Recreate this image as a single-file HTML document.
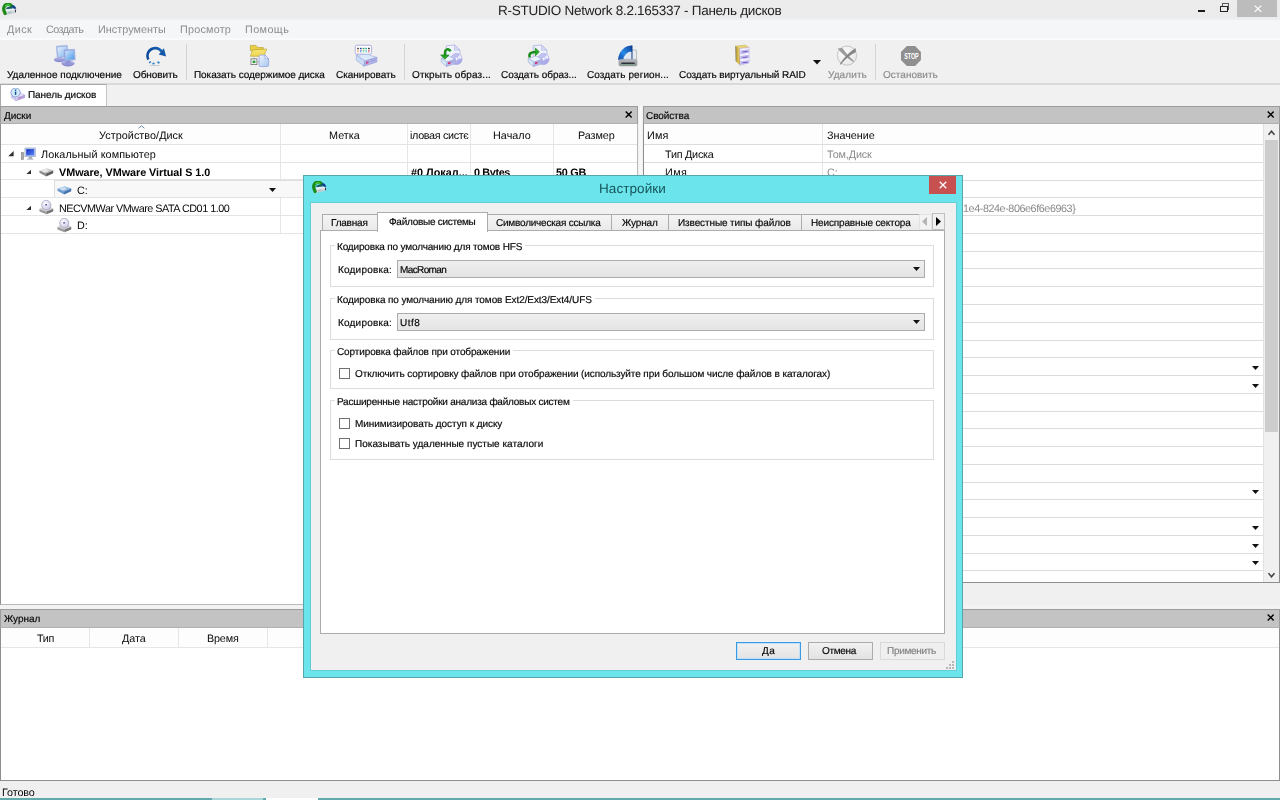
<!DOCTYPE html>
<html lang="ru"><head><meta charset="utf-8"><title>R-STUDIO Network</title>
<style>

html,body{margin:0;padding:0}
body{width:1280px;height:800px;overflow:hidden;position:relative;background:#f0f0f0;text-rendering:geometricPrecision;
 font-family:"Liberation Sans",sans-serif;font-size:10.8px;color:#000}
div,span.t,svg{position:absolute;box-sizing:border-box}
span.t{white-space:pre;display:block;will-change:transform}
span.h{-webkit-text-stroke:0.18px currentColor}
</style></head><body>
<div style="left:0px;top:0px;width:1280px;height:20px;background:linear-gradient(#ececec 0,#ebebeb 85%,#f0f0f0 100%)"></div>
<span class="t" style="left:497.80px;top:4px;font-size:13.5px;line-height:13.5px;color:#222;letter-spacing:-0.270px;">R-STUDIO Network 8.2.165337 - Панель дисков</span>
<svg style="left:2px;top:2.5px" width="15" height="13" viewBox="0 0 15 13"><defs><linearGradient id="ap2" x1="0" y1="0" x2="0.3" y2="1"><stop offset="0" stop-color="#ffffff"/><stop offset="1" stop-color="#b4c2cc"/></linearGradient></defs><path d="M7.6 2.9 Q11.2 1.9 13.2 5.9" stroke="#0d3c8a" stroke-width="2.6" fill="none"/><path d="M4.4 5.7 Q7 4.2 10.6 5.0" stroke="#15606e" stroke-width="1.9" fill="none"/><polygon points="3.8,6.4 11.6,5.5 14,6.6 14,9.4 4.6,12 3.6,10.6" fill="url(#ap2)"/><rect x="13" y="6.6" width="1" height="2.7" fill="#34344a"/><polygon points="6,9.2 9.4,8.4 9.4,9.3 6,10.1" fill="#93aaba"/><path d="M8.8 2.1 Q5.4 0.1 2.7 2.7 Q0.5 5.8 3.1 10.4" stroke="#1c8a18" stroke-width="3.3" fill="none" stroke-linecap="round"/><path d="M7.8 2.2 Q5.4 1.0 3.6 2.9" stroke="#4cc644" stroke-width="1.3" fill="none" stroke-linecap="round"/></svg>
<div style="left:1198px;top:9.8px;width:7.2000000000000455px;height:1.8999999999999986px;background:#1a1a1a"></div>
<div style="left:1222px;top:3.4px;width:7.2999999999999545px;height:6.6px;border:1px solid #555;border-top:1.8px solid #555"></div>
<div style="left:1220px;top:5.5px;width:7.5px;height:6.699999999999999px;border:1px solid #222;border-top:1.8px solid #222;background:#ebebeb"></div>
<div style="left:1237px;top:0px;width:40px;height:16.5px;background:#bcbcbc"></div>
<svg style="left:1253.6px;top:4.8px" width="8" height="7.6" viewBox="0 0 8 7.6"><path d="M0.7 0.6 L7.3 7 M7.3 0.6 L0.7 7" stroke="#fff" stroke-width="1.15" fill="none"/></svg>
<div style="left:0px;top:20px;width:1280px;height:18px;background:#f5f6f7"></div>
<div style="left:0px;top:38px;width:1280px;height:2px;background:#fbfbfb"></div>
<span class="t" style="left:6.80px;top:25px;font-size:10.8px;line-height:10.8px;color:#8d8d8d;letter-spacing:0.444px;">Диск</span>
<span class="t" style="left:45.80px;top:25px;font-size:10.8px;line-height:10.8px;color:#8d8d8d;letter-spacing:-0.539px;">Создать</span>
<span class="t" style="left:97.80px;top:25px;font-size:10.8px;line-height:10.8px;color:#8d8d8d;letter-spacing:0.047px;">Инструменты</span>
<span class="t" style="left:179.80px;top:25px;font-size:10.8px;line-height:10.8px;color:#8d8d8d;letter-spacing:0.212px;">Просмотр</span>
<span class="t" style="left:244.80px;top:25px;font-size:10.8px;line-height:10.8px;color:#8d8d8d;letter-spacing:0.419px;">Помощь</span>
<div style="left:0px;top:40px;width:1280px;height:43px;background:#f0f0f0"></div>
<div style="left:0px;top:83px;width:1280px;height:1.5px;background:#dadada"></div>
<span class="t h" style="left:6.80px;top:71px;font-size:10.0px;line-height:10.0px;color:#080808;letter-spacing:-0.008px;">Удаленное подключение</span>
<span class="t h" style="left:132.80px;top:71px;font-size:10.0px;line-height:10.0px;color:#080808;letter-spacing:-0.069px;">Обновить</span>
<span class="t h" style="left:193.80px;top:71px;font-size:10.0px;line-height:10.0px;color:#080808;letter-spacing:-0.064px;">Показать содержимое диска</span>
<span class="t h" style="left:335.80px;top:71px;font-size:10.0px;line-height:10.0px;color:#080808;letter-spacing:-0.015px;">Сканировать</span>
<span class="t h" style="left:411.80px;top:71px;font-size:10.0px;line-height:10.0px;color:#080808;letter-spacing:0.101px;">Открыть образ...</span>
<span class="t h" style="left:500.80px;top:71px;font-size:10.0px;line-height:10.0px;color:#080808;letter-spacing:-0.014px;">Создать образ...</span>
<span class="t h" style="left:586.80px;top:71px;font-size:10.0px;line-height:10.0px;color:#080808;letter-spacing:0.077px;">Создать регион...</span>
<span class="t h" style="left:678.80px;top:71px;font-size:10.0px;line-height:10.0px;color:#080808;letter-spacing:-0.060px;">Создать виртуальный RAID</span>
<span class="t h" style="left:827.80px;top:71px;font-size:10.0px;line-height:10.0px;color:#8d8d8d;letter-spacing:0.102px;">Удалить</span>
<span class="t h" style="left:882.80px;top:71px;font-size:10.0px;line-height:10.0px;color:#8d8d8d;letter-spacing:0.023px;">Остановить</span>
<div style="left:186px;top:44px;width:1px;height:35.5px;background:#d4d4d4"></div>
<div style="left:404px;top:44px;width:1px;height:35.5px;background:#d4d4d4"></div>
<div style="left:875px;top:44px;width:1px;height:35.5px;background:#d4d4d4"></div>
<svg style="left:53px;top:44px" width="24" height="24" viewBox="0 0 24 24"><defs><linearGradient id="rm1" x1="0" y1="0" x2="1" y2="1"><stop offset="0" stop-color="#e4effc"/><stop offset="1" stop-color="#86b6ee"/></linearGradient><linearGradient id="rm2" x1="0" y1="0" x2="1" y2="1"><stop offset="0" stop-color="#d3e6fb"/><stop offset="1" stop-color="#4a9ae8"/></linearGradient><linearGradient id="rm3" x1="0" y1="0" x2="0" y2="1"><stop offset="0" stop-color="#b4b6e8"/><stop offset="1" stop-color="#8284cc"/></linearGradient></defs><ellipse cx="6.5" cy="15.75" rx="5.6" ry="2.6" fill="url(#rm3)"/><polygon points="3.25,2.25 14.25,1.25 15.25,12.75 4.25,13.75" fill="#a6b9e8" stroke="#93a6dc" stroke-width="0.5"/><polygon points="4.50,3.50 13.25,2.60 14.00,11.75 5.25,12.50" fill="url(#rm1)"/><ellipse cx="15.0" cy="19.5" rx="6.6" ry="2.9" fill="url(#rm3)"/><polygon points="12.75,17.00 17.00,16.00 17.50,19.50 13.00,20.00" fill="#8f92d4"/><polygon points="11.00,6.00 21.50,5.25 22.25,15.75 11.75,17.00" fill="#9cb2e6" stroke="#8599d8" stroke-width="0.5"/><polygon points="12.25,7.25 20.40,6.60 21.10,14.75 12.90,15.75" fill="url(#rm2)"/></svg>
<svg style="left:144px;top:45px" width="24" height="22" viewBox="0 0 24 22"><defs><linearGradient id="rf1" x1="0" y1="0" x2="1" y2="0"><stop offset="0" stop-color="#0d4a9a"/><stop offset="1" stop-color="#1b66b8"/></linearGradient></defs><path d="M4.27 14.71 A7.9 7.9 0 1 1 19.07 9.90" stroke="url(#rf1)" stroke-width="2.6" fill="none"/><polygon points="19.90,3.25 22.10,11.50 14.75,9.50" fill="#1458a8"/><rect x="4.90" y="16.45" width="2.2" height="1.7" fill="#2f7fc6" transform="rotate(-35 6.0 17.25)"/><rect x="8.40" y="17.70" width="2.2" height="1.7" fill="#2f7fc6" transform="rotate(-10 9.5 18.5)"/><rect x="13.40" y="16.70" width="2.2" height="1.7" fill="#2f7fc6" transform="rotate(20 14.5 17.5)"/><ellipse cx="11.0" cy="20.6" rx="6" ry="0.5" fill="#c8c8c8"/></svg>
<svg style="left:249px;top:44px" width="22" height="24" viewBox="0 0 22 24"><defs><linearGradient id="fo1" x1="0" y1="0" x2="0" y2="1"><stop offset="0" stop-color="#f7e77a"/><stop offset="1" stop-color="#efd64c"/></linearGradient><linearGradient id="fo2" x1="0" y1="0" x2="1" y2="1"><stop offset="0" stop-color="#edf3fd"/><stop offset="1" stop-color="#a9c8ee"/></linearGradient></defs><polygon points="1.35,1.40 7.00,1.40 8.90,3.50 14.25,3.50 14.25,6.75 1.35,6.75" fill="#e9cf45" stroke="#b39c28" stroke-width="0.6"/><polygon points="3.75,5.75 17.75,5.10 14.75,12.25 1.35,12.25" fill="url(#fo1)" stroke="#b39c28" stroke-width="0.6"/><rect x="2.0" y="14.9" width="5.90" height="5.70" fill="#fff" stroke="#6f6f6f" stroke-width="0.8"/><rect x="3.6" y="16.55" width="2.8" height="2.6" fill="#2f9a3c"/><rect x="4.55" y="13.95" width="0.9" height="0.8" fill="#555"/><rect x="8.4" y="17.45" width="1.2" height="0.7" fill="#777"/><path d="M11.00,11.00 L16.00,11.00 L19.60,14.75 L19.60,21.25 Q19.60,22.50 18.50,22.50 L11.25,22.50 Q10.10,22.50 10.10,21.25 L10.10,12.25 Q10.10,11.00 11.00,11.00Z" fill="url(#fo2)" stroke="#8c98de" stroke-width="0.7"/><polygon points="16.00,11.00 16.00,14.75 19.60,14.75" fill="#f4f7fe" stroke="#8c98de" stroke-width="0.6"/></svg>
<svg style="left:354px;top:44px" width="25" height="24" viewBox="0 0 25 24"><polygon points="2.35,11.00 12.50,10.25 22.90,13.40 10.75,17.00" fill="#dde8f9" stroke="#9aa2da" stroke-width="0.6"/><polygon points="2.35,11.00 10.75,17.00 9.90,22.25 2.35,16.25" fill="#c9dbf5" stroke="#9aa2da" stroke-width="0.6"/><polygon points="10.75,17.00 22.90,13.40 22.90,17.90 9.90,22.25" fill="#adb4e7" stroke="#9098d6" stroke-width="0.6"/><polygon points="12.00,18.00 14.50,17.25 14.50,19.10 12.00,19.90" fill="#d93a78"/><polygon points="16.00,17.00 21.50,15.25 21.50,16.00 16.00,17.80" fill="#8f93d8"/><polygon points="11.00,10.25 16.00,10.25 15.00,13.00 13.00,12.50" fill="#c6ecf8"/><rect x="1.25" y="1.25" width="16.35" height="8.90" rx="1.6" fill="#fff" stroke="#a3a8dc" stroke-width="0.9"/><rect x="3.20" y="3.80" width="1.7" height="1.4" fill="#3a3a3a"/><rect x="3.20" y="6.20" width="1.7" height="1.4" fill="#e89a5a"/><rect x="3.20" y="8.10" width="1.7" height="0.9" fill="#e89a5a" opacity="0.35"/><rect x="5.95" y="3.80" width="1.7" height="1.4" fill="#1f3f9c"/><rect x="5.95" y="6.20" width="1.7" height="1.4" fill="#5a7fd8"/><rect x="5.95" y="8.10" width="1.7" height="0.9" fill="#5a7fd8" opacity="0.35"/><rect x="8.70" y="3.80" width="1.7" height="1.4" fill="#2f9a4a"/><rect x="8.70" y="6.20" width="1.7" height="1.4" fill="#69c878"/><rect x="8.70" y="8.10" width="1.7" height="0.9" fill="#69c878" opacity="0.35"/><rect x="11.30" y="3.80" width="1.7" height="1.4" fill="#2aa0a8"/><rect x="11.30" y="6.20" width="1.7" height="1.4" fill="#5cc0d0"/><rect x="11.30" y="8.10" width="1.7" height="0.9" fill="#5cc0d0" opacity="0.35"/><rect x="14.05" y="3.80" width="1.7" height="1.4" fill="#2a2a2a"/><rect x="14.05" y="6.20" width="1.7" height="1.4" fill="#c85a5a"/><rect x="14.05" y="8.10" width="1.7" height="0.9" fill="#c85a5a" opacity="0.35"/></svg>
<svg style="left:440px;top:44px" width="24" height="24" viewBox="0 0 24 24"><defs><linearGradient id="oia" x1="0" y1="0" x2="1" y2="1"><stop offset="0" stop-color="#cfcff6"/><stop offset="1" stop-color="#9d9de6"/></linearGradient></defs><polygon points="6.25,1.75 14.50,1.00 20.00,6.25 20.00,16.00 6.25,16.00" fill="#f0f3fd" stroke="#a6aade" stroke-width="0.7"/><polygon points="14.50,1.00 14.50,6.25 20.00,6.25" fill="#d7dbf5" stroke="#a6aade" stroke-width="0.5"/><circle cx="16.5" cy="15.0" r="5.6" fill="url(#oia)" stroke="#9c9ce2" stroke-width="0.6"/><path d="M16.5 15.0 L19.70 10.60 A5.5 5.5 0 0 1 21.90 14.40Z" fill="#f1f1fd" opacity="0.9"/><path d="M16.5 15.0 L13.30 19.40 A5.5 5.5 0 0 1 11.10 15.60Z" fill="#e4e4fa" opacity="0.6"/><circle cx="16.5" cy="15.0" r="1.4" fill="#fff" stroke="#b9b9ee" stroke-width="0.5"/><polygon points="1.25,14.25 9.25,12.25 15.25,15.25 7.25,18.00" fill="#eaf5fb" stroke="#a3a8dc" stroke-width="0.6"/><polygon points="1.25,14.25 7.25,18.00 6.50,22.50 1.25,18.25" fill="#d2e8f5" stroke="#a3a8dc" stroke-width="0.6"/><polygon points="7.25,18.00 15.25,15.25 15.25,19.50 6.50,22.50" fill="#b5bceb" stroke="#9aa0da" stroke-width="0.6"/><polygon points="8.00,18.60 10.60,17.80 10.60,19.50 8.00,20.30" fill="#d6306c"/><polygon points="11.50,18.00 14.75,16.90 14.75,17.60 11.50,18.70" fill="#8f93d8"/><path d="M10.60,7.25 Q8.00,3.50 5.25,6.75 L4.75,11.50" stroke="#1a931a" stroke-width="2.4" fill="none"/><polygon points="0.60,10.90 9.10,10.90 4.85,15.25" fill="#25a325" stroke="#137813" stroke-width="0.5"/></svg>
<svg style="left:526px;top:44px" width="25" height="24" viewBox="0 0 25 24"><defs><linearGradient id="cia" x1="0" y1="0" x2="1" y2="1"><stop offset="0" stop-color="#cfcff6"/><stop offset="1" stop-color="#9d9de6"/></linearGradient></defs><polygon points="7.25,1.75 15.50,1.00 21.00,6.25 21.00,16.00 7.25,16.00" fill="#f0f3fd" stroke="#a6aade" stroke-width="0.7"/><polygon points="15.50,1.00 15.50,6.25 21.00,6.25" fill="#d7dbf5" stroke="#a6aade" stroke-width="0.5"/><circle cx="17.5" cy="15.0" r="5.6" fill="url(#cia)" stroke="#9c9ce2" stroke-width="0.6"/><path d="M17.5 15.0 L20.70 10.60 A5.5 5.5 0 0 1 22.90 14.40Z" fill="#f1f1fd" opacity="0.9"/><path d="M17.5 15.0 L14.30 19.40 A5.5 5.5 0 0 1 12.10 15.60Z" fill="#e4e4fa" opacity="0.6"/><circle cx="17.5" cy="15.0" r="1.4" fill="#fff" stroke="#b9b9ee" stroke-width="0.5"/><polygon points="2.25,14.25 10.25,12.25 16.25,15.25 8.25,18.00" fill="#eaf5fb" stroke="#a3a8dc" stroke-width="0.6"/><polygon points="2.25,14.25 8.25,18.00 7.50,22.50 2.25,18.25" fill="#d2e8f5" stroke="#a3a8dc" stroke-width="0.6"/><polygon points="8.25,18.00 16.25,15.25 16.25,19.50 7.50,22.50" fill="#b5bceb" stroke="#9aa0da" stroke-width="0.6"/><polygon points="9.00,18.60 11.60,17.80 11.60,19.50 9.00,20.30" fill="#d6306c"/><polygon points="12.50,18.00 15.75,16.90 15.75,17.60 12.50,18.70" fill="#8f93d8"/><path d="M3.75,13.50 Q2.00,7.75 10.00,7.90" stroke="#1a8a1a" stroke-width="2.5" fill="none"/><polygon points="9.25,3.75 13.40,7.90 9.25,11.90" fill="#27a827" stroke="#137813" stroke-width="0.5"/></svg>
<svg style="left:617px;top:44px" width="23" height="24" viewBox="0 0 23 24"><defs><linearGradient id="rg1" x1="0" y1="1" x2="1" y2="0"><stop offset="0" stop-color="#0c48a8"/><stop offset="0.45" stop-color="#2a8ae6"/><stop offset="1" stop-color="#0b3f9a"/></linearGradient><linearGradient id="rg2" x1="0" y1="0" x2="0" y2="1"><stop offset="0" stop-color="#b9bcc0"/><stop offset="1" stop-color="#8d9196"/></linearGradient></defs><rect x="14.25" y="6.0" width="5.35" height="10.50" rx="1" fill="#e6eaee" stroke="#a4a8ac" stroke-width="0.7"/><path d="M1.15 15.9 A13.9 14.3 0 0 1 15.1 1.6 L15.1 15.9Z" fill="url(#rg1)"/><path d="M6.4 15.9 A8.7 8.3 0 0 1 15.1 7.6 L15.1 15.9Z" fill="#dfe9f6"/><rect x="14.5" y="1.6" width="0.9" height="14.30" fill="#0a2f7c"/><rect x="1.9" y="15.25" width="18.20" height="6.75" rx="1.6" fill="url(#rg2)" stroke="#9a9ea2" stroke-width="0.5"/><rect x="4.25" y="18.6" width="13.50" height="1.50" rx="0.6" fill="#2e3236"/><rect x="4.25" y="20.1" width="13.50" height="0.6" fill="#5aa85a" opacity="0.6"/></svg>
<svg style="left:733px;top:44px" width="20" height="24" viewBox="0 0 20 24"><defs><linearGradient id="rd1" x1="0" y1="0" x2="1" y2="0"><stop offset="0" stop-color="#77745a"/><stop offset="0.35" stop-color="#c9aa40"/><stop offset="0.7" stop-color="#e0c254"/><stop offset="1" stop-color="#a8892a"/></linearGradient></defs><polygon points="2.25,2.25 12.00,1.15 16.10,3.50 6.60,4.60" fill="#ecd57a" stroke="#c0a23a" stroke-width="0.5"/><polygon points="2.25,2.25 6.60,4.60 7.10,21.60 2.60,16.90" fill="url(#rd1)"/><polygon points="6.60,4.60 16.10,3.50 16.35,18.00 7.10,21.60" fill="#f4f4fc" stroke="#b7b2e4" stroke-width="0.5"/><polygon points="7.40,5.40 15.85,4.30 15.95,8.65 7.50,9.95" fill="#bdb4ee"/><polygon points="7.40,5.40 15.85,4.30 15.85,5.30 7.40,6.50" fill="#ffffff"/><polygon points="9.75,7.70 14.50,6.90 14.50,7.70 9.75,8.50" fill="#6546ae"/><polygon points="7.40,10.90 15.85,9.80 15.95,14.00 7.50,15.30" fill="#bdb4ee"/><polygon points="7.40,10.90 15.85,9.80 15.85,10.80 7.40,12.00" fill="#ffffff"/><polygon points="9.75,13.20 14.50,12.40 14.50,13.20 9.75,14.00" fill="#6546ae"/><polygon points="7.40,16.25 15.85,15.15 15.95,19.50 7.50,20.80" fill="#bdb4ee"/><polygon points="7.40,16.25 15.85,15.15 15.85,16.15 7.40,17.35" fill="#ffffff"/><polygon points="9.75,18.55 14.50,17.75 14.50,18.55 9.75,19.35" fill="#6546ae"/></svg>
<svg style="left:836px;top:44px" width="23" height="23" viewBox="0 0 23 23"><defs><radialGradient id="dl1" cx="0.35" cy="0.35" r="0.8"><stop offset="0" stop-color="#fbfbfb"/><stop offset="1" stop-color="#e6e6e6"/></radialGradient></defs><circle cx="11.0" cy="11.6" r="9.6" fill="url(#dl1)" stroke="#b9b9b9" stroke-width="0.8"/><path d="M1.60,4.40 L6.25,4.10 Q10.50,10.50 18.10,17.25 L17.40,17.90 Q9.00,13.00 1.60,4.40Z" fill="#9a9a9a"/><path d="M19.60,3.90 L19.90,7.90 Q11.00,12.50 4.60,20.85 L3.90,20.10 Q9.00,11.00 19.60,3.90Z" fill="#868686"/></svg>
<svg style="left:900px;top:45px" width="22" height="22" viewBox="0 0 22 22"><polygon points="6.88,0.94 15.12,0.94 20.94,6.88 20.94,15.12 15.12,20.94 6.88,20.94 0.94,15.12 0.94,6.88" fill="#8f8f8f"/><text x="4.25" y="13.88" font-family="Liberation Sans, sans-serif" font-weight="bold" font-size="8.6" fill="#fff" textLength="14.4" lengthAdjust="spacingAndGlyphs">STOP</text></svg>
<svg style="left:812.5px;top:60px" width="8" height="5" viewBox="0 0 8 5"><path d="M0 0H8L4 4.5Z" fill="#111"/></svg>
<div style="left:0px;top:84.5px;width:1280px;height:21.5px;background:#f1f1f1"></div>
<div style="left:0px;top:84px;width:107px;height:23px;background:#fff;border:1px solid #a9a9a9;border-bottom:none;border-right-color:#c6c6c6"></div>
<span class="t h" style="left:27.80px;top:91px;font-size:10.0px;line-height:10.0px;color:#080808;letter-spacing:-0.067px;">Панель дисков</span>
<svg style="left:10px;top:88px" width="16" height="14" viewBox="0 0 16 14"><polygon points="1.25,7.87 11.00,4.87 14.75,7.12 6.12,10.50" fill="#e9e4f8" stroke="#b5acdc" stroke-width="0.5"/><polygon points="1.25,7.87 6.12,10.50 5.94,12.75 1.44,9.94" fill="#ddd6f4" stroke="#b5acdc" stroke-width="0.5"/><polygon points="6.12,10.50 14.75,7.12 14.56,9.75 5.94,12.75" fill="#b9a6e0" stroke="#a594d4" stroke-width="0.5"/><polygon points="6.50,9.19 7.32,8.92 7.25,11.62 6.42,11.92" fill="#ffffff"/><polygon points="8.37,9.94 11.00,8.92 11.00,9.45 8.37,10.50" fill="#d45a9a"/><circle cx="5.56" cy="4.5" r="4.6" fill="#d3ebfb" stroke="#7f93cf" stroke-width="0.9"/><rect x="4.81" y="3.60" width="1.5" height="3.2" fill="#114f8f"/><rect x="4.81" y="1.60" width="1.5" height="1.3" fill="#114f8f"/></svg>
<div style="left:638px;top:106px;width:5px;height:498px;background:linear-gradient(90deg,#f0f0f0,#f9f9f9 50%,#f0f0f0)"></div>
<div style="left:0px;top:604.5px;width:1280px;height:4.5px;background:#f3f3f3"></div>
<div style="left:0px;top:106px;width:638px;height:498.5px;background:#fff;border:1px solid #8e8e8e;border-bottom-color:#b9b9b9;border-right-color:#b9b9b9"></div>
<div style="left:0px;top:106px;width:638px;height:18px;background:#c3c3c3;border:1px solid #9c9c9c;border-bottom-color:#b0b0b0"></div>
<span class="t h" style="left:4.30px;top:112px;font-size:10.0px;line-height:10.0px;color:#080808;letter-spacing:-0.007px;">Диски</span>
<svg style="left:624.8px;top:110.8px" width="7.4" height="7" viewBox="0 0 7.4 7"><path d="M0.7 0.6L6.7 6.4M6.7 0.6L0.7 6.4" stroke="#000" stroke-width="1.4" fill="none"/></svg>
<div style="left:1px;top:124px;width:636px;height:21px;background:#fdfdfd;border-bottom:1px solid #e3e3e3"></div>
<div style="left:280px;top:124px;width:1px;height:109px;background:#e6e6e6"></div>
<div style="left:407px;top:124px;width:1px;height:109px;background:#e6e6e6"></div>
<div style="left:470px;top:124px;width:1px;height:109px;background:#e6e6e6"></div>
<div style="left:553px;top:124px;width:1px;height:109px;background:#e6e6e6"></div>
<span class="t" style="left:98.80px;top:131px;font-size:10.8px;line-height:10.8px;color:#080808;letter-spacing:0.060px;">Устройство/Диск</span>
<span class="t" style="left:328.80px;top:131px;font-size:10.8px;line-height:10.8px;color:#080808;letter-spacing:0.028px;">Метка</span>
<span class="t" style="left:409.80px;top:131px;font-size:10.8px;line-height:10.8px;color:#080808;letter-spacing:-0.343px;">іловая систє</span>
<span class="t" style="left:492.80px;top:131px;font-size:10.8px;line-height:10.8px;color:#080808;letter-spacing:0.035px;">Начало</span>
<span class="t" style="left:577.80px;top:131px;font-size:10.8px;line-height:10.8px;color:#080808;letter-spacing:-0.062px;">Размер</span>
<svg style="left:137.5px;top:125px" width="7" height="4" viewBox="0 0 7 4"><path d="M0.5 3.3L3.5 0.8L6.5 3.3" stroke="#6b8ba8" stroke-width="1" fill="none"/></svg>
<div style="left:54px;top:180px;width:583px;height:18px;background:#f8f8f8;border:1px solid #dedede"></div>
<div style="left:1px;top:161.6px;width:636px;height:1.0px;background:#e4e4e4"></div>
<div style="left:1px;top:179.3px;width:636px;height:1.0px;background:#e4e4e4"></div>
<div style="left:1px;top:197.0px;width:636px;height:1.0px;background:#e4e4e4"></div>
<div style="left:1px;top:214.8px;width:636px;height:1.0px;background:#e4e4e4"></div>
<div style="left:1px;top:232.5px;width:636px;height:1.0px;background:#e4e4e4"></div>
<span class="t" style="left:40.80px;top:150px;font-size:10.8px;line-height:10.8px;color:#080808;letter-spacing:0.090px;">Локальный компьютер</span>
<span class="t" style="left:58.80px;top:168px;font-size:10.8px;line-height:10.8px;color:#000;font-weight:bold;letter-spacing:-0.035px;">VMware, VMware Virtual S 1.0</span>
<span class="t" style="left:76.80px;top:186px;font-size:10.8px;line-height:10.8px;color:#080808;">C:</span>
<span class="t" style="left:58.80px;top:204px;font-size:10.8px;line-height:10.8px;color:#080808;letter-spacing:-0.476px;">NECVMWar VMware SATA CD01 1.00</span>
<span class="t" style="left:76.80px;top:221px;font-size:10.8px;line-height:10.8px;color:#080808;">D:</span>
<span class="t" style="left:410.80px;top:168px;font-size:10.8px;line-height:10.8px;color:#000;font-weight:bold;letter-spacing:0.035px;">#0 Локал...</span>
<span class="t" style="left:473.80px;top:168px;font-size:10.8px;line-height:10.8px;color:#000;font-weight:bold;letter-spacing:-0.354px;">0 Bytes</span>
<span class="t" style="left:556.30px;top:168px;font-size:10.8px;line-height:10.8px;color:#000;font-weight:bold;letter-spacing:-0.230px;">50 GB</span>
<svg style="left:269px;top:188px" width="7" height="4" viewBox="0 0 7 4"><path d="M0 0H7L3.5 4Z" fill="#111"/></svg>
<svg style="left:20px;top:147px" width="17" height="14" viewBox="0 0 17 14"><defs><linearGradient id="pc1" x1="0" y1="0" x2="1" y2="1"><stop offset="0" stop-color="#1530c8"/><stop offset="1" stop-color="#5a86f2"/></linearGradient></defs><rect x="1.23" y="5.4" width="2.40" height="7.20" fill="#a9a9a9" stroke="#7d7d7d" stroke-width="0.5"/><rect x="4.9" y="0.9" width="10.65" height="8.85" fill="#bccbe2" stroke="#93a4c4" stroke-width="0.5"/><rect x="6.25" y="2.1" width="7.95" height="6.30" fill="url(#pc1)"/><polygon points="8.88,9.90 11.88,9.90 12.63,11.85 8.13,11.85" fill="#9aa2ac"/><rect x="6.85" y="11.7" width="6.53" height="1.05" fill="#b5bcc6"/></svg>
<svg style="left:39px;top:167.5px" width="15" height="10" viewBox="0 0 15 10"><defs><linearGradient id="dva" x1="0" y1="0" x2="1" y2="0.4"><stop offset="0" stop-color="#ececec"/><stop offset="1" stop-color="#b9b9b9"/></linearGradient></defs><polygon points="0.4,2.6 7.8,0.3 14.3,2.6 7,5.4" fill="url(#dva)"/><polygon points="0.4,2.6 7,5.4 7.2,8.5 0.5,4.8" fill="#8a8a8a"/><polygon points="7,5.4 14.3,2.6 14.2,5.2 7.2,8.5" fill="#5c5c5c"/><ellipse cx="6.6" cy="2.6" rx="3" ry="1.1" fill="#fff" opacity="0.55" transform="rotate(-6 6.6 2.6)"/></svg>
<svg style="left:57px;top:185.5px" width="15" height="10" viewBox="0 0 15 10"><defs><linearGradient id="dvb" x1="0" y1="0" x2="1" y2="0.4"><stop offset="0" stop-color="#b5d2ee"/><stop offset="1" stop-color="#86b2de"/></linearGradient></defs><polygon points="0.4,2.6 7.8,0.3 14.3,2.6 7,5.4" fill="url(#dvb)"/><polygon points="0.4,2.6 7,5.4 7.2,8.5 0.5,4.8" fill="#6796cc"/><polygon points="7,5.4 14.3,2.6 14.2,5.2 7.2,8.5" fill="#4575ae"/><ellipse cx="6.6" cy="2.6" rx="3" ry="1.1" fill="#fff" opacity="0.55" transform="rotate(-6 6.6 2.6)"/></svg>
<svg style="left:39px;top:200px" width="15" height="15" viewBox="0 0 15 15"><defs><radialGradient id="cd1" cx="0.4" cy="0.35" r="0.7"><stop offset="0" stop-color="#ffffff"/><stop offset="1" stop-color="#c6c5e4"/></radialGradient></defs><polygon points="0.3,9 4.6,6.6 10.6,6.6 14.3,8.8 7.4,11.5" fill="#d0d0d0"/><polygon points="0.3,9 7.4,11.5 7.4,14.2 0.5,11.4" fill="#9c9c9c"/><polygon points="7.4,11.5 14.3,8.8 14.2,11.4 7.4,14.2" fill="#767676"/><ellipse cx="7.3" cy="5.1" rx="4.6" ry="4.8" fill="url(#cd1)" stroke="#a3a2c2" stroke-width="0.7"/><circle cx="7.1" cy="4.8" r="0.9" fill="#45459a"/></svg>
<svg style="left:57px;top:218px" width="15" height="15" viewBox="0 0 15 15"><defs><radialGradient id="cd2" cx="0.4" cy="0.35" r="0.7"><stop offset="0" stop-color="#ffffff"/><stop offset="1" stop-color="#c6c5e4"/></radialGradient></defs><polygon points="0.3,9 4.6,6.6 10.6,6.6 14.3,8.8 7.4,11.5" fill="#d0d0d0"/><polygon points="0.3,9 7.4,11.5 7.4,14.2 0.5,11.4" fill="#9c9c9c"/><polygon points="7.4,11.5 14.3,8.8 14.2,11.4 7.4,14.2" fill="#767676"/><ellipse cx="7.3" cy="5.1" rx="4.6" ry="4.8" fill="url(#cd2)" stroke="#a3a2c2" stroke-width="0.7"/><circle cx="7.1" cy="4.8" r="0.9" fill="#45459a"/></svg>
<svg style="left:8px;top:151.3px" width="5.8" height="5.4" viewBox="0 0 5.8 5.4"><path d="M5.6 0.1V5.2H0.2Z" fill="#2e2e2e"/></svg>
<svg style="left:25.6px;top:168.9px" width="5.8" height="5.4" viewBox="0 0 5.8 5.4"><path d="M5.6 0.1V5.2H0.2Z" fill="#2e2e2e"/></svg>
<svg style="left:25.7px;top:204.6px" width="5.8" height="5.4" viewBox="0 0 5.8 5.4"><path d="M5.6 0.1V5.2H0.2Z" fill="#2e2e2e"/></svg>
<div style="left:643px;top:106px;width:637px;height:477px;background:#fff;border:1px solid #8e8e8e"></div>
<div style="left:643px;top:106px;width:637px;height:18px;background:#c3c3c3;border:1px solid #9c9c9c;border-bottom-color:#b0b0b0"></div>
<span class="t h" style="left:646.30px;top:112px;font-size:10.0px;line-height:10.0px;color:#080808;letter-spacing:-0.089px;">Свойства</span>
<svg style="left:1266.6px;top:110.8px" width="7.4" height="7" viewBox="0 0 7.4 7"><path d="M0.7 0.6L6.7 6.4M6.7 0.6L0.7 6.4" stroke="#000" stroke-width="1.4" fill="none"/></svg>
<div style="left:644px;top:124px;width:619px;height:21px;background:#fdfdfd"></div>
<div style="left:822px;top:124px;width:1px;height:458px;background:#e6e6e6"></div>
<span class="t" style="left:647.30px;top:131px;font-size:10.8px;line-height:10.8px;color:#080808;letter-spacing:0.134px;">Имя</span>
<span class="t" style="left:826.80px;top:131px;font-size:10.8px;line-height:10.8px;color:#080808;letter-spacing:-0.013px;">Значение</span>
<div style="left:644px;top:144.0px;width:619px;height:1.0px;background:#dcdcdc"></div>
<div style="left:644px;top:161.5px;width:619px;height:1.0px;background:#dcdcdc"></div>
<div style="left:644px;top:179.5px;width:619px;height:1.0px;background:#dcdcdc"></div>
<div style="left:644px;top:197.0px;width:619px;height:1.0px;background:#dcdcdc"></div>
<div style="left:644px;top:215.0px;width:619px;height:1.0px;background:#dcdcdc"></div>
<div style="left:644px;top:232.5px;width:619px;height:1.0px;background:#dcdcdc"></div>
<div style="left:644px;top:250.5px;width:619px;height:1.0px;background:#dcdcdc"></div>
<div style="left:644px;top:268.0px;width:619px;height:1.0px;background:#dcdcdc"></div>
<div style="left:644px;top:286.0px;width:619px;height:1.0px;background:#dcdcdc"></div>
<div style="left:644px;top:303.5px;width:619px;height:1.0px;background:#dcdcdc"></div>
<div style="left:644px;top:321.5px;width:619px;height:1.0px;background:#dcdcdc"></div>
<div style="left:644px;top:339.5px;width:619px;height:1.0px;background:#dcdcdc"></div>
<div style="left:644px;top:357.0px;width:619px;height:1.0px;background:#dcdcdc"></div>
<div style="left:644px;top:375.0px;width:619px;height:1.0px;background:#dcdcdc"></div>
<div style="left:644px;top:392.5px;width:619px;height:1.0px;background:#dcdcdc"></div>
<div style="left:644px;top:410.5px;width:619px;height:1.0px;background:#dcdcdc"></div>
<div style="left:644px;top:428.0px;width:619px;height:1.0px;background:#dcdcdc"></div>
<div style="left:644px;top:446.0px;width:619px;height:1.0px;background:#dcdcdc"></div>
<div style="left:644px;top:463.5px;width:619px;height:1.0px;background:#dcdcdc"></div>
<div style="left:644px;top:481.5px;width:619px;height:1.0px;background:#dcdcdc"></div>
<div style="left:644px;top:499.0px;width:619px;height:1.0px;background:#dcdcdc"></div>
<div style="left:644px;top:517.0px;width:619px;height:1.0px;background:#dcdcdc"></div>
<div style="left:644px;top:534.5px;width:619px;height:1.0px;background:#dcdcdc"></div>
<div style="left:644px;top:552.5px;width:619px;height:1.0px;background:#dcdcdc"></div>
<div style="left:644px;top:570.0px;width:619px;height:1.0px;background:#dcdcdc"></div>
<span class="t" style="left:664.80px;top:150px;font-size:10.8px;line-height:10.8px;color:#080808;letter-spacing:-0.240px;">Тип Диска</span>
<span class="t" style="left:826.80px;top:150px;font-size:10.8px;line-height:10.8px;color:#8a8a8a;letter-spacing:-0.122px;">Том,Диск</span>
<span class="t" style="left:664.80px;top:168px;font-size:10.8px;line-height:10.8px;color:#080808;letter-spacing:0.384px;">Имя</span>
<span class="t" style="left:826.80px;top:168px;font-size:10.8px;line-height:10.8px;color:#8a8a8a;">C:</span>
<span class="t" style="left:962.80px;top:204px;font-size:10.8px;line-height:10.8px;color:#8a8a8a;letter-spacing:-0.433px;">1e4-824e-806e6f6e6963}</span>
<svg style="left:1252px;top:365.8px" width="7" height="4" viewBox="0 0 7 4"><path d="M0 0H7L3.5 4Z" fill="#111"/></svg>
<svg style="left:1252px;top:383.7px" width="7" height="4" viewBox="0 0 7 4"><path d="M0 0H7L3.5 4Z" fill="#111"/></svg>
<svg style="left:1252px;top:490.3px" width="7" height="4" viewBox="0 0 7 4"><path d="M0 0H7L3.5 4Z" fill="#111"/></svg>
<svg style="left:1252px;top:525.8px" width="7" height="4" viewBox="0 0 7 4"><path d="M0 0H7L3.5 4Z" fill="#111"/></svg>
<svg style="left:1252px;top:543.7px" width="7" height="4" viewBox="0 0 7 4"><path d="M0 0H7L3.5 4Z" fill="#111"/></svg>
<svg style="left:1252px;top:561.4px" width="7" height="4" viewBox="0 0 7 4"><path d="M0 0H7L3.5 4Z" fill="#111"/></svg>
<div style="left:1263px;top:124px;width:16px;height:458px;background:#f0f0f0;border-left:1px solid #e2e2e2"></div>
<div style="left:1265px;top:139.5px;width:13px;height:292.5px;background:#cdcdcd"></div>
<svg style="left:1268px;top:129.5px" width="7" height="6" viewBox="0 0 7 6"><path d="M0.5 4.8L3.5 1.2L6.5 4.8" stroke="#444" stroke-width="1.6" fill="none"/></svg>
<svg style="left:1268px;top:572px" width="7" height="6" viewBox="0 0 7 6"><path d="M0.5 1.2L3.5 4.8L6.5 1.2" stroke="#444" stroke-width="1.6" fill="none"/></svg>
<div style="left:0px;top:609px;width:1280px;height:172px;background:#fff;border:1px solid #8e8e8e"></div>
<div style="left:0px;top:609px;width:1280px;height:19px;background:#c3c3c3;border:1px solid #9c9c9c;border-bottom-color:#b0b0b0"></div>
<span class="t h" style="left:3.80px;top:615px;font-size:10.0px;line-height:10.0px;color:#080808;letter-spacing:-0.040px;">Журнал</span>
<svg style="left:1266.6px;top:613.8px" width="7.4" height="7" viewBox="0 0 7.4 7"><path d="M0.7 0.6L6.7 6.4M6.7 0.6L0.7 6.4" stroke="#000" stroke-width="1.4" fill="none"/></svg>
<div style="left:1px;top:628px;width:1278px;height:20px;background:#fdfdfd;border-bottom:1px solid #e6e6e6"></div>
<div style="left:89px;top:628px;width:1px;height:19px;background:#e6e6e6"></div>
<div style="left:178px;top:628px;width:1px;height:19px;background:#e6e6e6"></div>
<div style="left:267px;top:628px;width:1px;height:19px;background:#e6e6e6"></div>
<span class="t" style="left:37.30px;top:634px;font-size:10.8px;line-height:10.8px;color:#080808;letter-spacing:-0.350px;">Тип</span>
<span class="t" style="left:121.80px;top:634px;font-size:10.8px;line-height:10.8px;color:#080808;letter-spacing:-0.041px;">Дата</span>
<span class="t" style="left:206.80px;top:634px;font-size:10.8px;line-height:10.8px;color:#080808;letter-spacing:-0.171px;">Время</span>
<span class="t" style="left:1.80px;top:788px;font-size:10.8px;line-height:10.8px;color:#080808;letter-spacing:-0.109px;">Готово</span>
<div style="left:0px;top:797.5px;width:1280px;height:2.5px;background:#62a9ae"></div>
<div style="left:212px;top:798px;width:51px;height:2px;background:#a9d6d8"></div>
<div style="left:266px;top:798px;width:52px;height:2px;background:#fff"></div>
<div style="left:303px;top:175px;width:660px;height:502.5px;background:#6be5eb;border:1px solid #55a6ad"></div>
<span class="t" style="left:599.30px;top:182px;font-size:13.5px;line-height:13.5px;color:#16555c;letter-spacing:0.075px;">Настройки</span>
<div style="left:929px;top:176px;width:27px;height:17.69999999999999px;background:#c75050"></div>
<svg style="left:311.7px;top:181px" width="15" height="13" viewBox="0 0 15 13"><defs><linearGradient id="ap311" x1="0" y1="0" x2="0.3" y2="1"><stop offset="0" stop-color="#ffffff"/><stop offset="1" stop-color="#b4c2cc"/></linearGradient></defs><path d="M7.6 2.9 Q11.2 1.9 13.2 5.9" stroke="#0d3c8a" stroke-width="2.6" fill="none"/><path d="M4.4 5.7 Q7 4.2 10.6 5.0" stroke="#15606e" stroke-width="1.9" fill="none"/><polygon points="3.8,6.4 11.6,5.5 14,6.6 14,9.4 4.6,12 3.6,10.6" fill="url(#ap311)"/><rect x="13" y="6.6" width="1" height="2.7" fill="#34344a"/><polygon points="6,9.2 9.4,8.4 9.4,9.3 6,10.1" fill="#93aaba"/><path d="M8.8 2.1 Q5.4 0.1 2.7 2.7 Q0.5 5.8 3.1 10.4" stroke="#1c8a18" stroke-width="3.3" fill="none" stroke-linecap="round"/><path d="M7.8 2.2 Q5.4 1.0 3.6 2.9" stroke="#4cc644" stroke-width="1.3" fill="none" stroke-linecap="round"/></svg>
<svg style="left:939px;top:181px" width="8" height="8" viewBox="0 0 8 8"><path d="M0.7 0.7L7.3 7.3M7.3 0.7L0.7 7.3" stroke="#fff" stroke-width="1.25" fill="none"/></svg>
<div style="left:309.5px;top:202px;width:647.0px;height:468.5px;background:#f0f0f0;border:1px solid #63cdd5"></div>
<div style="left:320px;top:230px;width:625px;height:404px;background:#fff;border:1px solid #acacac"></div>
<div style="left:322px;top:214px;width:56px;height:16px;background:linear-gradient(#f4f4f4,#eaeaea);border:1px solid #acacac;border-bottom:none"></div>
<span class="t h" style="left:330.80px;top:219px;font-size:10.0px;line-height:10.0px;color:#080808;letter-spacing:-0.210px;">Главная</span>
<div style="left:487px;top:214px;width:125px;height:16px;background:linear-gradient(#f4f4f4,#eaeaea);border:1px solid #acacac;border-bottom:none"></div>
<span class="t h" style="left:495.80px;top:219px;font-size:10.0px;line-height:10.0px;color:#080808;letter-spacing:-0.219px;">Символическая ссылка</span>
<div style="left:611px;top:214px;width:57.5px;height:16px;background:linear-gradient(#f4f4f4,#eaeaea);border:1px solid #acacac;border-bottom:none"></div>
<span class="t h" style="left:621.80px;top:219px;font-size:10.0px;line-height:10.0px;color:#080808;letter-spacing:-0.140px;">Журнал</span>
<div style="left:667.5px;top:214px;width:134.5px;height:16px;background:linear-gradient(#f4f4f4,#eaeaea);border:1px solid #acacac;border-bottom:none"></div>
<span class="t h" style="left:677.80px;top:219px;font-size:10.0px;line-height:10.0px;color:#080808;letter-spacing:-0.106px;">Известные типы файлов</span>
<div style="left:801px;top:214px;width:120px;height:16px;background:linear-gradient(#f4f4f4,#eaeaea);border:1px solid #acacac;border-bottom:none"></div>
<span class="t h" style="left:810.80px;top:219px;font-size:10.0px;line-height:10.0px;color:#080808;letter-spacing:-0.149px;">Неисправные сектора</span>
<div style="left:377px;top:212px;width:111px;height:20px;background:#fff;border:1px solid #acacac;border-bottom:none"></div>
<span class="t h" style="left:388.80px;top:218px;font-size:10.0px;line-height:10.0px;color:#080808;letter-spacing:-0.265px;">Файловые системы</span>
<div style="left:919px;top:213.5px;width:13px;height:16.5px;background:#f3f3f3;border:1px solid #e3e3e3"></div>
<div style="left:932px;top:213px;width:13px;height:17.19999999999999px;background:#f0f0f0;border:1px solid #c0c0c0"></div>
<svg style="left:922px;top:217px" width="5" height="9" viewBox="0 0 5 9"><path d="M5 0V9L0 4.5Z" fill="#b5b5b5"/></svg>
<svg style="left:936px;top:217px" width="5" height="9" viewBox="0 0 5 9"><path d="M0 0V9L5 4.5Z" fill="#000"/></svg>
<div style="left:330px;top:245px;width:604px;height:42px;border:1px solid #dcdcdc"></div>
<div style="left:335px;top:242px;width:190px;height:7px;background:#fff"></div>
<span class="t h" style="left:337.30px;top:243px;font-size:10.0px;line-height:10.0px;color:#080808;letter-spacing:-0.163px;">Кодировка по умолчанию для томов HFS</span>
<div style="left:330px;top:298px;width:604px;height:42px;border:1px solid #dcdcdc"></div>
<div style="left:335px;top:295px;width:259.5px;height:7px;background:#fff"></div>
<span class="t h" style="left:337.30px;top:296px;font-size:10.0px;line-height:10.0px;color:#080808;letter-spacing:-0.091px;">Кодировка по умолчанию для томов Ext2/Ext3/Ext4/UFS</span>
<div style="left:330px;top:350px;width:604px;height:39px;border:1px solid #dcdcdc"></div>
<div style="left:335px;top:347px;width:178px;height:7px;background:#fff"></div>
<span class="t h" style="left:337.30px;top:348px;font-size:10.0px;line-height:10.0px;color:#080808;letter-spacing:-0.121px;">Сортировка файлов при отображении</span>
<div style="left:330px;top:400px;width:604px;height:60px;border:1px solid #dcdcdc"></div>
<div style="left:335px;top:397px;width:237.5px;height:7px;background:#fff"></div>
<span class="t h" style="left:337.30px;top:398px;font-size:10.0px;line-height:10.0px;color:#080808;letter-spacing:-0.231px;">Расширенные настройки анализа файловых систем</span>
<div style="left:397px;top:260px;width:528px;height:17.5px;background:linear-gradient(#efefef,#e4e4e4);border:1px solid #acacac"></div>
<span class="t h" style="left:337.80px;top:266px;font-size:10.0px;line-height:10.0px;color:#080808;letter-spacing:0.203px;">Кодировка:</span>
<span class="t h" style="left:400.30px;top:266px;font-size:10.0px;line-height:10.0px;color:#080808;letter-spacing:-0.620px;">MacRoman</span>
<svg style="left:913px;top:267px" width="7" height="4" viewBox="0 0 7 4"><path d="M0 0H7L3.5 4Z" fill="#111"/></svg>
<div style="left:397px;top:313px;width:528px;height:17.5px;background:linear-gradient(#efefef,#e4e4e4);border:1px solid #acacac"></div>
<span class="t h" style="left:337.80px;top:319px;font-size:10.0px;line-height:10.0px;color:#080808;letter-spacing:0.203px;">Кодировка:</span>
<span class="t h" style="left:400.30px;top:319px;font-size:10.0px;line-height:10.0px;color:#080808;letter-spacing:0.485px;">Utf8</span>
<svg style="left:913px;top:320px" width="7" height="4" viewBox="0 0 7 4"><path d="M0 0H7L3.5 4Z" fill="#111"/></svg>
<div style="left:338.8px;top:367.5px;width:11.0px;height:11.0px;background:#fff;border:1px solid #707070"></div>
<span class="t h" style="left:354.80px;top:370px;font-size:10.0px;line-height:10.0px;color:#080808;letter-spacing:-0.100px;">Отключить сортировку файлов при отображении (используйте при большом числе файлов в каталогах)</span>
<div style="left:338.8px;top:417.5px;width:11.0px;height:11.0px;background:#fff;border:1px solid #707070"></div>
<span class="t h" style="left:354.80px;top:420px;font-size:10.0px;line-height:10.0px;color:#080808;letter-spacing:-0.069px;">Минимизировать доступ к диску</span>
<div style="left:338.8px;top:437.5px;width:11.0px;height:11.0px;background:#fff;border:1px solid #707070"></div>
<span class="t h" style="left:354.80px;top:440px;font-size:10.0px;line-height:10.0px;color:#080808;letter-spacing:0.013px;">Показывать удаленные пустые каталоги</span>
<div style="left:736px;top:641.5px;width:65px;height:18.0px;background:linear-gradient(#f1f1f1,#e3e3e3);border:1px solid #3c9ae0;box-shadow:inset 0 0 0 1px #bfe0f8"></div>
<div style="left:808px;top:641.5px;width:65px;height:18.0px;background:linear-gradient(#f1f1f1,#e3e3e3);border:1px solid #acacac"></div>
<div style="left:880px;top:641.5px;width:65px;height:18.0px;background:#efefef;border:1px solid #d9d9d9"></div>
<span class="t h" style="left:761.80px;top:647px;font-size:10.0px;line-height:10.0px;color:#080808;letter-spacing:0.456px;">Да</span>
<span class="t h" style="left:822.30px;top:647px;font-size:10.0px;line-height:10.0px;color:#080808;letter-spacing:-0.318px;">Отмена</span>
<span class="t h" style="left:887.30px;top:647px;font-size:10.0px;line-height:10.0px;color:#838383;letter-spacing:-0.296px;">Применить</span>
<div style="left:952px;top:661px;width:1.5px;height:1.5px;background:#b8b8b8"></div>
<div style="left:952px;top:664px;width:1.5px;height:1.5px;background:#b8b8b8"></div>
<div style="left:952px;top:667px;width:1.5px;height:1.5px;background:#b8b8b8"></div>
<div style="left:949px;top:664px;width:1.5px;height:1.5px;background:#b8b8b8"></div>
<div style="left:949px;top:667px;width:1.5px;height:1.5px;background:#b8b8b8"></div>
<div style="left:946px;top:667px;width:1.5px;height:1.5px;background:#b8b8b8"></div>
</body></html>
